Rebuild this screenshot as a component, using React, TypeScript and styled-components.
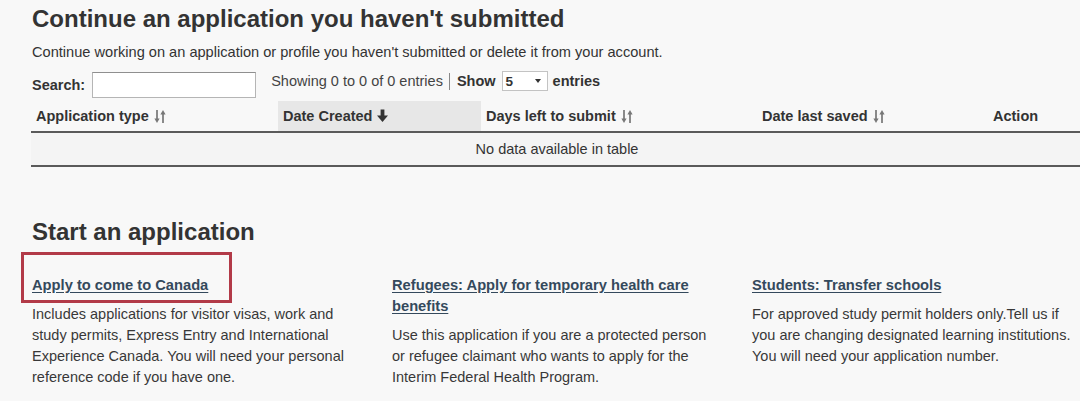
import React from "react";
import styled, { createGlobalStyle } from "styled-components";

const GlobalStyle = createGlobalStyle`
  html, body { margin: 0; padding: 0; background: #ffffff; overflow: hidden; }
  body { font-family: "Liberation Sans", Arial, sans-serif; color: #333; }
  * { box-sizing: border-box; }
`;

const Page = styled.main`
  background: #f8f8f8;
  height: 401px;
  padding-left: 32px;
  overflow: hidden;
`;

const Title = styled.h1<{ $top: number }>`
  margin: ${(p) => p.$top}px 0 0;
  font-size: 24px;
  line-height: 28px;
  font-weight: 700;
  color: #333;
  white-space: nowrap;
`;

const Lead = styled.p`
  margin: 9px 0 0;
  font-size: 14.6px;
  line-height: 20px;
  color: #333;
`;

const Toolbar = styled.div`
  display: flex;
  align-items: flex-start;
  margin-top: 9px;
  height: 27px;
  font-size: 14.5px;
`;

const SearchGroup = styled.label`
  display: flex;
  align-items: center;
  height: 26px;
  margin-top: 1px;
  font-weight: 700;
  gap: 7px;
`;

const SearchInput = styled.input`
  width: 164px;
  height: 26px;
  border: 1px solid #b5b5b5;
  border-top-color: #8f8f8f;
  background: #fff;
  padding: 2px 4px;
  font: inherit;
  outline: none;
`;

const Info = styled.div`
  display: flex;
  align-items: center;
  height: 20px;
  margin-left: 15px;
  color: #444;
  white-space: nowrap;
`;

const Divider = styled.span`
  display: inline-block;
  width: 1px;
  height: 17px;
  background: #888;
  margin: 0 7px 0 6px;
`;

const Strong = styled.b`
  color: #333;
`;

const SelectBox = styled.span`
  display: inline-flex;
  align-items: center;
  justify-content: space-between;
  width: 46px;
  height: 20px;
  margin: 0 5px 0 6px;
  padding: 0 6px 0 3px;
  border: 1px solid #c3c3c3;
  background: #fff;
  font-weight: 700;
  color: #333;
  font-size: 13.5px;
`;

const Caret = styled.span`
  width: 0;
  height: 0;
  border-left: 3px solid transparent;
  border-right: 3px solid transparent;
  border-top: 4px solid #333;
`;

const Table = styled.table`
  margin: 3px 0 0 -1px;
  width: 1052px;
  border-collapse: collapse;
  table-layout: fixed;
  font-size: 14.5px;
`;

const HeadCell = styled.th<{ $w?: number; $active?: boolean }>`
  width: ${(p) => (p.$w ? `${p.$w}px` : "auto")};
  height: 30px;
  padding: 0 5px;
  text-align: left;
  font-weight: 700;
  line-height: 30px;
  color: #333;
  background: ${(p) => (p.$active ? "#e7e7e7" : "transparent")};
  border-bottom: 2px solid #5a5a5a;
  white-space: nowrap;
`;

const HeadInner = styled.span`
  display: inline-flex;
  align-items: center;
  gap: 5px;
`;

const EmptyCell = styled.td`
  height: 30px;
  text-align: center;
  line-height: 30px;
  color: #333;
  background: #f4f4f4;
  border-bottom: 2px solid #5a5a5a;
`;

const SectionTitle = styled.h2`
  margin: 51px 0 0;
  font-size: 24px;
  line-height: 28px;
  font-weight: 700;
  color: #333;
`;

const Cards = styled.div`
  display: grid;
  grid-template-columns: repeat(3, 330px);
  column-gap: 30px;
  margin-top: 29px;
`;

const Card = styled.section``;

const CardTitle = styled.h3`
  position: relative;
  margin: 0;
  font-size: 14.7px;
  line-height: 21px;
  font-weight: 700;
`;

const CardLink = styled.a`
  color: #34495c;
  text-decoration: underline;
  text-underline-offset: 2px;
`;

const Highlight = styled.span`
  position: absolute;
  left: -11px;
  top: -23px;
  width: 211px;
  height: 51px;
  border: 3px solid #b23a48;
  pointer-events: none;
`;

const CardText = styled.p`
  margin: 8px 0 0;
  font-size: 14.5px;
  line-height: 21px;
  color: #383838;
`;

const SortIcon = () => (
  <svg width="12" height="15" viewBox="0 0 12 15" aria-hidden="true">
    <line x1="3" y1="1" x2="3" y2="11" stroke="#777" strokeWidth="1.7" />
    <polygon points="0.4,9.5 5.6,9.5 3,14" fill="#777" />
    <line x1="9" y1="14" x2="9" y2="4" stroke="#777" strokeWidth="1.7" />
    <polygon points="6.4,5.5 11.6,5.5 9,1" fill="#777" />
  </svg>
);

const DownIcon = () => (
  <svg width="11" height="14" viewBox="0 0 11 14" aria-hidden="true">
    <rect x="3.6" y="0.5" width="3.8" height="7" fill="#333" />
    <polygon points="0,6.5 11,6.5 5.5,13" fill="#333" />
  </svg>
);

const columns = [
  { label: "Application type", w: 247, icon: "sort" },
  { label: "Date Created", w: 203, icon: "down", active: true },
  { label: "Days left to submit", w: 276, icon: "sort" },
  { label: "Date last saved", w: 231, icon: "sort" },
  { label: "Action", icon: "none" },
];

const cards = [
  {
    title: "Apply to come to Canada",
    text: "Includes applications for visitor visas, work and study permits, Express Entry and International Experience Canada. You will need your personal reference code if you have one.",
    highlight: true,
  },
  {
    title: "Refugees: Apply for temporary health care benefits",
    text: "Use this application if you are a protected person or refugee claimant who wants to apply for the Interim Federal Health Program.",
  },
  {
    title: "Students: Transfer schools",
    text: "For approved study permit holders only.Tell us if you are changing designated learning institutions. You will need your application number.",
  },
];

export default function App() {
  return (
    <>
      <GlobalStyle />
      <Page>
        <Title $top={5}>Continue an application you haven't submitted</Title>
        <Lead>
          Continue working on an application or profile you haven't submitted or delete it from your account.
        </Lead>
        <Toolbar>
          <SearchGroup>
            Search:
            <SearchInput type="text" aria-label="Search" />
          </SearchGroup>
          <Info>
            Showing 0 to 0 of 0 entries
            <Divider />
            <Strong>Show</Strong>
            <SelectBox>
              5 <Caret />
            </SelectBox>
            <Strong>entries</Strong>
          </Info>
        </Toolbar>
        <Table>
          <thead>
            <tr>
              {columns.map((c) => (
                <HeadCell key={c.label} $w={c.w} $active={c.active}>
                  <HeadInner>
                    {c.label}
                    {c.icon === "sort" && <SortIcon />}
                    {c.icon === "down" && <DownIcon />}
                  </HeadInner>
                </HeadCell>
              ))}
            </tr>
          </thead>
          <tbody>
            <tr>
              <EmptyCell colSpan={5}>No data available in table</EmptyCell>
            </tr>
          </tbody>
        </Table>
        <SectionTitle>Start an application</SectionTitle>
        <Cards>
          {cards.map((c) => (
            <Card key={c.title}>
              <CardTitle>
                {c.highlight && <Highlight />}
                <CardLink href="#">{c.title}</CardLink>
              </CardTitle>
              <CardText>{c.text}</CardText>
            </Card>
          ))}
        </Cards>
      </Page>
    </>
  );
}
